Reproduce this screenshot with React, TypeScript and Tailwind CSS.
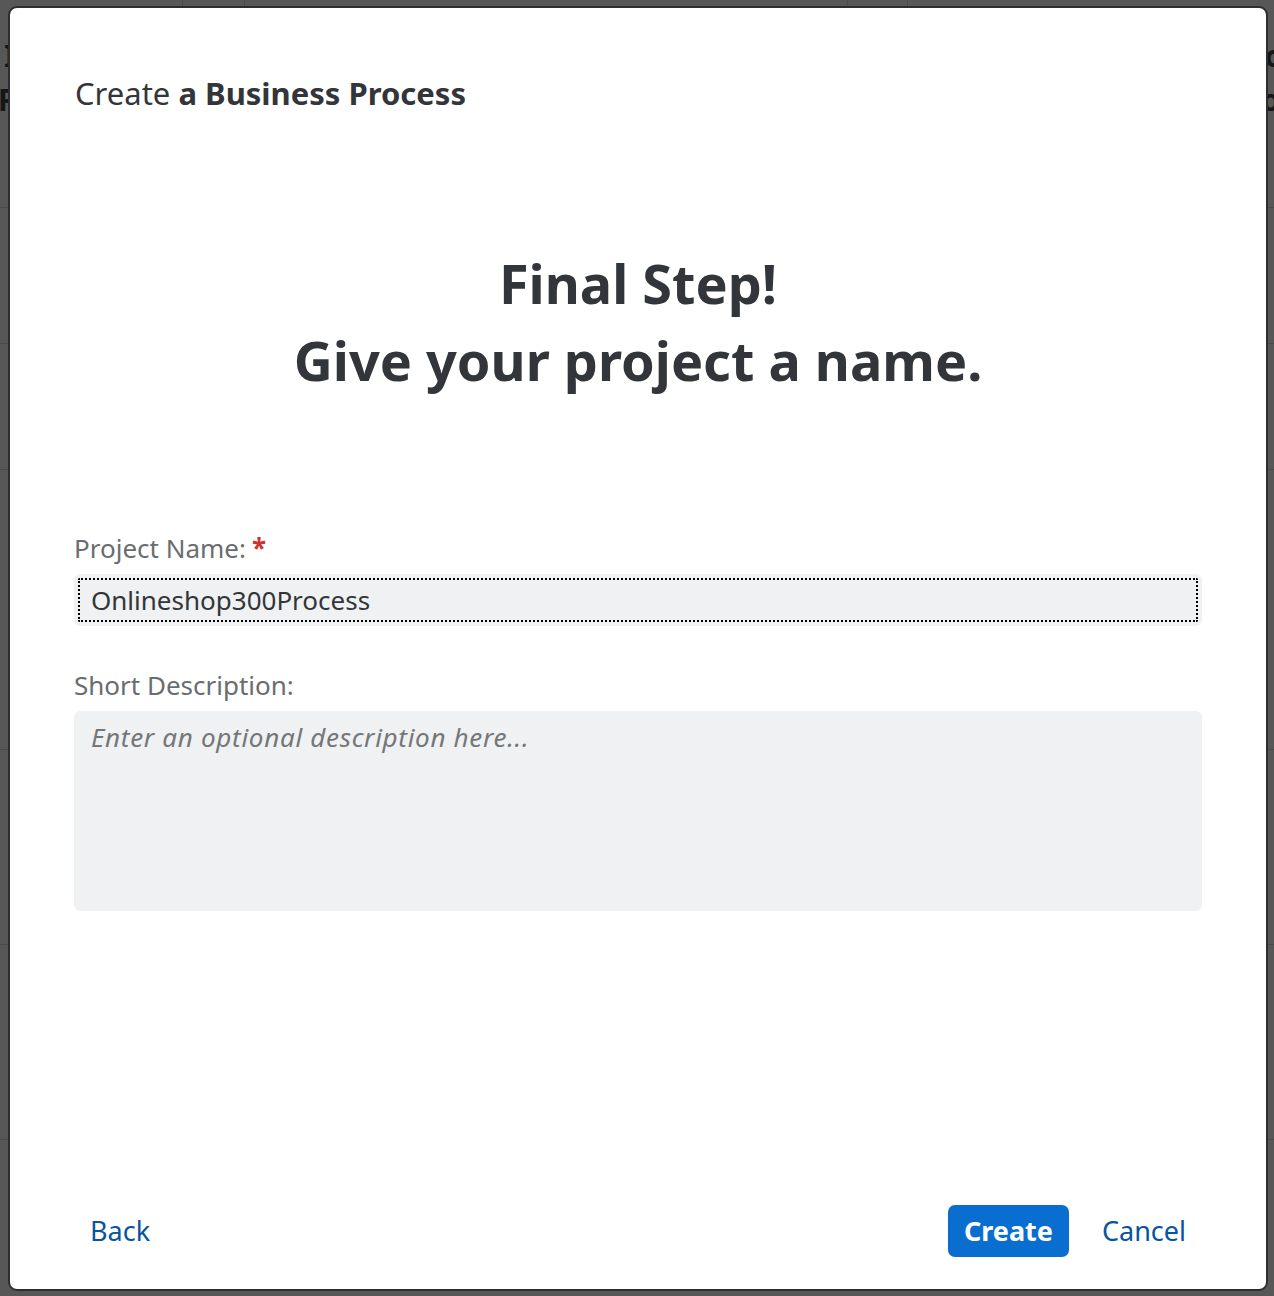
import React from "react";

const font = { fontFamily: "'Noto Sans', Lato, sans-serif" };

function BgRow({ h, children }: { h: string; children?: React.ReactNode }) {
  return <div className={`${h} shrink-0 border-b border-[#4b4b4b]`}>{children}</div>;
}

export default function App() {
  return (
    <div
      className="relative h-[1296px] w-[1274px] overflow-hidden bg-[#575757]"
      style={font}
    >
      {/* background page behind overlay */}
      <div className="flex h-full flex-col">
        <div className="flex h-[208px] shrink-0 border-b border-[#4b4b4b]">
          <div className="flex w-[183px] shrink-0 flex-col border-r border-[#4b4b4b] pt-[34px] text-[30px] font-bold leading-[44px] text-[#161616]">
            <span className="pl-[4px]">I</span>
            <span className="ml-[-2px]">P</span>
          </div>
          <div className="w-[62px] shrink-0 border-r border-[#4b4b4b]" />
          <div className="w-[603px] shrink-0 border-r border-[#4b4b4b]" />
          <div className="w-[60px] shrink-0 border-r border-[#4b4b4b]" />
          <div className="flex flex-1 flex-col items-end pt-[34px] text-[30px] font-bold leading-[44px] text-[#161616]">
            <span className="mr-[-6px]">c</span>
            <span className="mr-[-6px]">o</span>
          </div>
        </div>
        <BgRow h="h-[136px]" />
        <BgRow h="h-[126px]" />
        <BgRow h="h-[280px]" />
        <BgRow h="h-[195px]" />
        <BgRow h="h-[195px]" />
      </div>

      {/* dialog overlay */}
      <div className="absolute left-[8px] top-[6px] flex h-[1285px] w-[1260px] flex-col rounded-[9px] border-2 border-[#2e2e2e] bg-white">
        <div className="px-[65px] pt-[68px] text-[31px] leading-[34px] text-[#32363a]">
          Create <span className="font-bold">a Business Process</span>
        </div>

        <div className="mt-[135px] text-center text-[54px] font-bold leading-[77px] text-[#32363a]">
          <div>Final Step!</div>
          <div>Give your project a name.</div>
        </div>

        <div className="mt-[133px] flex flex-col px-[64px]">
          <div className="flex items-center text-[26px] leading-[32px] text-[#6a6d70]">
            <span>Project Name:</span>
            <span className="ml-[6px] font-bold text-[#d0312d]">*</span>
          </div>
          <div className="mt-[10px] flex h-[52px] items-center rounded-[6px] bg-[#eff1f2] px-[17px] text-[26px] text-[#32363a] outline-2 outline-dotted outline-black outline-offset-[-6px]">
            Onlineshop300Process
          </div>

          <div className="mt-[43px] text-[26px] leading-[32px] text-[#6a6d70]">
            Short Description:
          </div>
          <div className="mt-[10px] h-[200px] rounded-[6px] bg-[#eff1f2] px-[17px] pt-[10px] text-[26px] italic leading-[32px] tracking-[0.7px] text-[#74777a]">
            Enter an optional description here...
          </div>
        </div>

        <div className="mt-auto flex items-center px-[64px] pb-[32px]">
          <button className="h-[52px] px-[16px] text-[27px] text-[#0854a0]">
            Back
          </button>
          <div className="ml-auto flex items-center gap-[17px]">
            <button className="h-[52px] rounded-[7px] bg-[#0a6ed1] px-[16px] text-[27px] font-bold text-white">
              Create
            </button>
            <button className="h-[52px] px-[16px] text-[27px] text-[#0854a0]">
              Cancel
            </button>
          </div>
        </div>
      </div>
    </div>
  );
}
